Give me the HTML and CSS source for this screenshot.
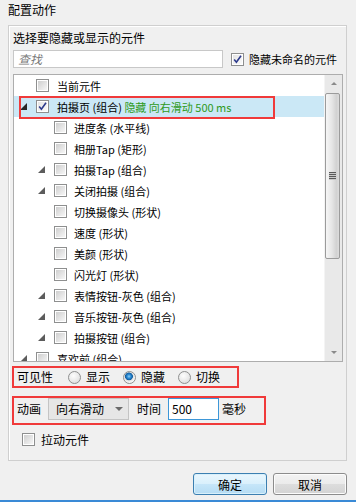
FILE: index.html
```html
<!DOCTYPE html>
<html lang="zh">
  <head>
    <meta charset="UTF-8" />
    <title>配置动作</title>
    <link rel="stylesheet" href="styles.css">
  </head>
  <body>
    <div class="title">配置动作</div>

    <div class="group">
      <div class="caption">选择要隐藏或显示的元件</div>

      <div class="search-row">
        <div class="search">查找</div>
        <div class="check-label">
          <span class="cb checked"><svg width="9" height="9" viewBox="0 0 9 9"><path d="M1.2 4.6 L3.4 7.3 L8 0.8" fill="none" stroke="#2c3a8c" stroke-width="1.6"/></svg></span>
          <span>隐藏未命名的元件</span>
        </div>
      </div>

      <div class="tree">
        <div class="tree-list">
          <div class="row"><span class="twist"></span><span class="cb"></span><span>当前元件</span></div>
          <div class="row selected">
            <span class="twist dark"><svg width="7" height="7" viewBox="0 0 7 7"><polygon points="7,0 7,7 0,7"/></svg></span>
            <span class="cb checked"><svg width="9" height="9" viewBox="0 0 9 9"><path d="M1.2 4.6 L3.4 7.3 L8 0.8" fill="none" stroke="#2c3a8c" stroke-width="1.6"/></svg></span>
            <span>拍摄页 (组合) <span class="state">隐藏 向右滑动 500 ms</span></span>
            <span class="mark"></span>
          </div>
          <div class="row lv1"><span class="twist"></span><span class="cb"></span><span>进度条 (水平线)</span></div>
          <div class="row lv1"><span class="twist"></span><span class="cb"></span><span>相册Tap (矩形)</span></div>
          <div class="row lv1"><span class="twist"><svg width="7" height="7" viewBox="0 0 7 7"><polygon points="7,0 7,7 0,7"/></svg></span><span class="cb"></span><span>拍摄Tap (组合)</span></div>
          <div class="row lv1"><span class="twist"><svg width="7" height="7" viewBox="0 0 7 7"><polygon points="7,0 7,7 0,7"/></svg></span><span class="cb"></span><span>关闭拍摄 (组合)</span></div>
          <div class="row lv1"><span class="twist"></span><span class="cb"></span><span>切换摄像头 (形状)</span></div>
          <div class="row lv1"><span class="twist"></span><span class="cb"></span><span>速度 (形状)</span></div>
          <div class="row lv1"><span class="twist"></span><span class="cb"></span><span>美颜 (形状)</span></div>
          <div class="row lv1"><span class="twist"></span><span class="cb"></span><span>闪光灯 (形状)</span></div>
          <div class="row lv1"><span class="twist"><svg width="7" height="7" viewBox="0 0 7 7"><polygon points="7,0 7,7 0,7"/></svg></span><span class="cb"></span><span>表情按钮-灰色 (组合)</span></div>
          <div class="row lv1"><span class="twist"><svg width="7" height="7" viewBox="0 0 7 7"><polygon points="7,0 7,7 0,7"/></svg></span><span class="cb"></span><span>音乐按钮-灰色 (组合)</span></div>
          <div class="row lv1"><span class="twist"><svg width="7" height="7" viewBox="0 0 7 7"><polygon points="7,0 7,7 0,7"/></svg></span><span class="cb"></span><span>拍摄按钮 (组合)</span></div>
          <div class="row"><span class="twist"><svg width="7" height="7" viewBox="0 0 7 7"><polygon points="7,0 7,7 0,7"/></svg></span><span class="cb"></span><span>喜欢前 (组合)</span></div>
        </div>
        <div class="scrollbar">
          <div class="sb-btn"><span class="arrow-up"></span></div>
          <div class="sb-track">
            <div class="thumb"><span class="grip"></span></div>
          </div>
          <div class="sb-btn"><span class="arrow-down"></span></div>
        </div>
      </div>

      <div class="vis-box">
        <span>可见性</span>
        <span class="opt first"><span class="radio"></span>显示</span>
        <span class="opt"><span class="radio on"></span>隐藏</span>
        <span class="opt"><span class="radio"></span>切换</span>
      </div>

      <div class="anim-box">
        <span class="lbl">动画</span>
        <div class="combo">向右滑动<span class="arrow-down dark"></span></div>
        <span class="lbl time">时间</span>
        <div class="num">500</div>
        <span class="lbl unit">毫秒</span>
      </div>

      <div class="drag-row"><span class="cb"></span><span>拉动元件</span></div>
    </div>

    <div class="buttons">
      <button class="btn primary">确定</button>
      <button class="btn">取消</button>
    </div>
    <div class="edge"></div>
  </body>
</html>
```

FILE: styles.css
```css
html, body {
  margin: 0;
  width: 356px;
  height: 502px;
  overflow: hidden;
}

body {
  background: #f0f0f0;
  color: #000;
  font-family: "Noto Sans CJK SC", sans-serif;
  font-size: 12px;
}

.title {
  padding: 2px 0 0 8px;
  line-height: 16px;
  height: 16px;
}

.group {
  box-sizing: border-box;
  margin: 7px 9px 0 8px;
  height: 436px;
  border: 1px solid #cfcfcf;
  box-shadow: inset 1px 1px 0 #fff;
  padding: 4px 3px 0 4px;
}

.caption {
  line-height: 16px;
}

.search-row {
  display: flex;
  align-items: center;
  margin-top: 4px;
  height: 18px;
}

.search {
  box-sizing: border-box;
  width: 210px;
  height: 18px;
  border: 1px solid #c8c8c8;
  background: #fff;
  color: #7a7a7a;
  font-style: italic;
  line-height: 16px;
  padding-left: 4px;
}

.check-label {
  display: flex;
  align-items: center;
  margin-left: 8px;
  gap: 5px;
  font-size: 11px;
  line-height: 16px;
  white-space: nowrap;
}

/* checkbox */
.cb {
  box-sizing: border-box;
  flex: none;
  width: 13px;
  height: 13px;
  border: 1px solid #8e8f8f;
  padding: 1px;
  background: linear-gradient(135deg, #cfcfcf, #f6f6f6) content-box, #fff;
}

.cb svg {
  display: block;
}

.cb.checked {
  background: linear-gradient(135deg, #e4e4e4, #fafafa) content-box, #fff;
}

/* tree */
.tree {
  box-sizing: border-box;
  display: flex;
  margin-top: 6px;
  width: 330px;
  height: 288px;
  border: 1px solid #adadad;
  background: #fff;
}

.tree-list {
  flex: 1;
  overflow: hidden;
  font-size: 11px;
}

.row {
  position: relative;
  display: flex;
  align-items: center;
  height: 21px;
  white-space: nowrap;
  line-height: 16px;
}

.row.lv1 {
  padding-left: 18px;
}

.row .cb {
  margin-right: 8px;
}

.row.lv1 .cb {
  margin-right: 7px;
}

.row.selected {
  background: #cbe8f6;
}

.twist {
  position: relative;
  flex: none;
  width: 22px;
  height: 21px;
}

.twist svg {
  position: absolute;
  left: 6px;
  top: 7px;
  fill: #5c5c5c;
}

.twist.dark svg {
  fill: #262626;
}

.state {
  color: #2e9a22;
}

.mark {
  position: absolute;
  left: 5px;
  top: 0;
  box-sizing: border-box;
  width: 256px;
  height: 23px;
  border: 2px solid #f03a3a;
}

/* scrollbar */
.scrollbar {
  flex: none;
  display: flex;
  flex-direction: column;
  width: 17px;
  background: #e9e9e9;
  border-left: 1px solid #f4f4f4;
}

.sb-btn {
  height: 17px;
  display: flex;
  align-items: center;
  justify-content: center;
}

.sb-track {
  flex: 1;
  padding-top: 1px;
}

.thumb {
  box-sizing: border-box;
  width: 15px;
  height: 166px;
  border: 1px solid #9b9b9b;
  border-radius: 2px;
  background: linear-gradient(to right, #f6f6f6, #e6e6e6 45%, #d2d2d2 80%, #dcdcdc);
  display: flex;
  align-items: center;
  justify-content: center;
}

.grip {
  width: 7px;
  height: 8px;
  background: repeating-linear-gradient(to bottom, #5a5a5a 0 1px, #c9c9c9 1px 2px);
}

.arrow-up {
  width: 0;
  height: 0;
  border-left: 3px solid transparent;
  border-right: 3px solid transparent;
  border-bottom: 3px solid #8a8a8a;
}

.arrow-down {
  width: 0;
  height: 0;
  border-left: 3px solid transparent;
  border-right: 3px solid transparent;
  border-top: 3px solid #8a8a8a;
}

/* visibility */
.vis-box {
  box-sizing: border-box;
  display: flex;
  align-items: center;
  margin: 4px 0 0 -1px;
  width: 227px;
  height: 22px;
  border: 2px solid #f03a3a;
  padding-left: 3px;
  line-height: 16px;
}

.opt {
  display: flex;
  align-items: center;
  gap: 5px;
  margin-left: 13px;
}

.opt.first {
  margin-left: 15px;
}

.radio {
  box-sizing: border-box;
  width: 13px;
  height: 13px;
  border-radius: 50%;
  border: 1px solid #8e8f8f;
  background: radial-gradient(circle at 40% 35%, #fdfdfd, #d8d8d8);
}

.radio.on {
  background: radial-gradient(circle at 45% 40%, #8fd0f6 0, #2a8ad4 2px, #155d9e 3.6px, #e0e0e0 4.2px, #f7f7f7 6px);
}

/* animation */
.anim-box {
  box-sizing: border-box;
  display: flex;
  align-items: flex-start;
  margin: 8px 0 0 -1px;
  width: 254px;
  height: 29px;
  border: 2px solid #f03a3a;
  padding-left: 3px;
}

.lbl {
  line-height: 22px;
}

.combo {
  box-sizing: border-box;
  display: flex;
  align-items: center;
  justify-content: space-between;
  margin-left: 7px;
  width: 81px;
  height: 22px;
  padding: 0 5px 0 7px;
  border: 1px solid #c4c4c4;
  background: #e6e6e6;
  line-height: 16px;
}

.arrow-down.dark {
  border-left-width: 4px;
  border-right-width: 4px;
  border-top: 4px solid #6a6a6a;
}

.lbl.time {
  margin-left: 8px;
}

.num {
  box-sizing: border-box;
  margin-left: 7px;
  width: 51px;
  height: 22px;
  border: 1px solid #3d97d8;
  background: #fff;
  padding-left: 3px;
  line-height: 20px;
}

.lbl.unit {
  margin-left: 3px;
}

.drag-row {
  display: flex;
  align-items: center;
  gap: 6px;
  margin: 8px 0 0 9px;
  height: 13px;
  line-height: 16px;
}

/* buttons */
.buttons {
  display: flex;
  justify-content: flex-end;
  gap: 6px;
  margin-top: 12px;
  padding-right: 9px;
}

.btn {
  box-sizing: border-box;
  width: 74px;
  height: 22px;
  padding: 0;
  border: 1px solid #8c8c8c;
  border-radius: 3px;
  background: linear-gradient(#f3f3f3, #ebebeb 50%, #dddddd 51%, #d3d3d3);
  box-shadow: inset 0 0 0 1px #fcfcfc;
  font-family: "Noto Sans CJK SC", sans-serif;
  font-size: 12px;
  color: #000;
}

.btn.primary {
  border-color: #3c7fb1;
  background: linear-gradient(#eaf6fd, #d9f0fc 50%, #c6e6f9 51%, #b5dcf4);
  box-shadow: inset 0 0 0 1px #d8f0fb;
}

.edge {
  margin-top: 5px;
  height: 2px;
  background: #3a8ad6;
}
```
